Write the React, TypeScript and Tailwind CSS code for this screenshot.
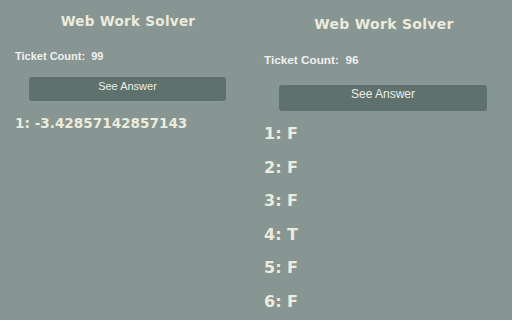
import React from "react";

const comic = { fontFamily: '"Comic Sans MS", "DejaVu Sans", sans-serif' };

export default function App() {
  const right = ["F", "F", "F", "T", "F", "F"];
  return (
    <div className="w-[512px] h-[320px] bg-[#879593] flex overflow-hidden">
      {/* left panel */}
      <div className="w-[256px] flex flex-col">
        <div className="mt-[12px] text-center text-[13.5px] font-bold text-[#ecebdc] leading-[18px] tracking-[0.3px]" style={comic}>
          Web Work Solver
        </div>
        <div className="mt-[20px] ml-[15px] text-[11px] font-bold text-[#f0f0ee] leading-[12px] font-['Liberation_Sans',sans-serif]">
          Ticket Count:&nbsp; 99
        </div>
        <div className="mt-[15px] ml-[29px] w-[197px] h-[24px] rounded-[3px] bg-[#5e716d] text-center text-[11px] text-[#ecece6] leading-[14px] pt-[2px] font-['Liberation_Sans',sans-serif]">
          See Answer
        </div>
        <div className="mt-[13px] ml-[15px] text-[13.6px] font-bold text-[#ecebdc] leading-[18px]" style={comic}>
          1: -3.42857142857143
        </div>
      </div>
      {/* right panel */}
      <div className="w-[256px] flex flex-col">
        <div className="mt-[14px] text-center text-[14px] font-bold text-[#ecebdc] leading-[20px] tracking-[0.3px]" style={comic}>
          Web Work Solver
        </div>
        <div className="mt-[19px] ml-[8px] text-[11.75px] font-bold text-[#f0f0ee] leading-[13px] font-['Liberation_Sans',sans-serif]">
          Ticket Count:&nbsp; 96
        </div>
        <div className="mt-[19px] ml-[23px] w-[208px] h-[26px] rounded-[3px] bg-[#5e716d] text-center text-[12px] text-[#ecece6] leading-[15px] pt-[2px] font-['Liberation_Sans',sans-serif]">
          See Answer
        </div>
        <div className="mt-[14px] ml-[8px] flex flex-col gap-[15.6px]">
          {right.map((v, i) => (
            <div key={i} className="text-[16px] font-bold text-[#ecebdc] leading-[18px]" style={comic}>
              {i + 1}: {v}
            </div>
          ))}
        </div>
      </div>
    </div>
  );
}
